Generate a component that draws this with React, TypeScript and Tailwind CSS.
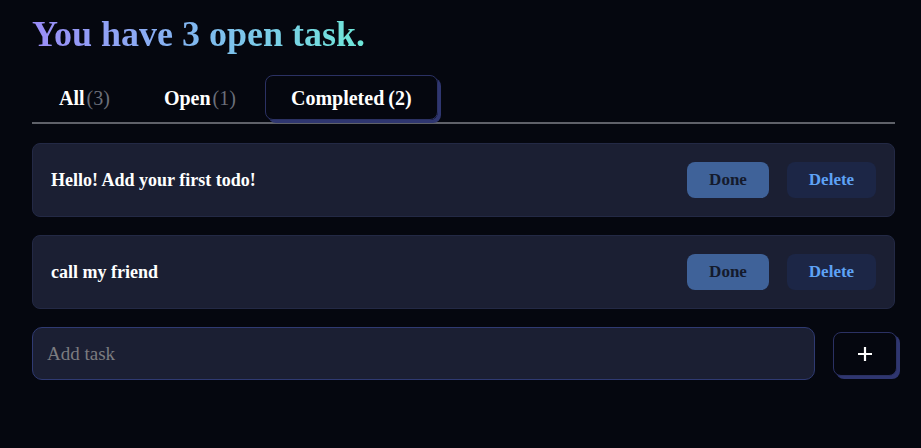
const tasks = [
  { id: 1, text: 'Hello! Add your first todo!' },
  { id: 2, text: 'call my friend' },
]

function Tab({ label, count, active }: { label: string; count: number; active?: boolean }) {
  return (
    <button
      className={
        active
          ? 'h-[45px] px-[25px] rounded-lg border border-[#2b3163] shadow-[3px_3px_0_#2f3670] text-[20px] font-bold text-white'
          : 'h-[45px] px-[24px] rounded-lg border border-transparent text-[20px] font-bold text-white'
      }
    >
      {label}
      <span className={active ? 'ml-1 text-white' : 'ml-0.5 font-normal text-[#6b6f7a]'}>({count})</span>
    </button>
  )
}

export default function App() {
  return (
    <div
      className="min-h-screen w-full bg-[#05070f] pl-8 pr-[26px] pt-[13px]"
      style={{ fontFamily: '"Liberation Serif", "DejaVu Serif", serif' }}
    >
      <h1 className="text-[36px] font-bold leading-[42px] bg-gradient-to-r from-[#9a8cf8] via-[#80b9f0] to-[#6ee7d8] bg-clip-text text-transparent w-fit">
        You have 3 open task.
      </h1>

      {/* tabs */}
      <div className="mt-[20px] flex gap-[4px] pl-[2px] border-b-2 border-[#5f6169] pb-[2px]">
        <Tab label="All" count={3} />
        <Tab label="Open" count={1} />
        <Tab label="Completed" count={2} active />
      </div>

      <div className="mt-[19px] flex flex-col gap-[18px]">
        {tasks.map((t) => (
          <div
            key={t.id}
            className="h-[74px] rounded-lg border border-[#232945] bg-[#1b1f33] flex items-center justify-between pl-[18px] pr-[18px]"
          >
            <span className="text-[18px] font-bold text-white">{t.text}</span>
            <div className="flex gap-[18px]">
              <button className="h-9 w-[82px] rounded-lg bg-[#3f6299] text-[17px] font-bold text-[#141a2c]">
                Done
              </button>
              <button className="h-9 w-[89px] rounded-lg bg-[#1c2646] text-[17px] font-bold text-[#5ea2f5]">
                Delete
              </button>
            </div>
          </div>
        ))}
      </div>

      <div className="mt-[18px] flex items-center gap-[18px]">
        <input
          placeholder="Add task"
          className="h-[53px] flex-1 rounded-[10px] border border-[#2f3a72] bg-[#1b1f33] px-[14px] text-[19px] text-white placeholder:text-[#7c7c80] outline-none"
        />
        <button className="h-[44px] w-[64px] mr-[-2px] rounded-lg border border-[#2b3163] bg-[#05070f] shadow-[3px_3px_0_#2f3670] flex items-center justify-center">
          <svg width="16" height="16" viewBox="0 0 16 16">
            <path d="M8 1v14M1 8h14" stroke="white" strokeWidth="2.2" />
          </svg>
        </button>
      </div>
    </div>
  )
}
